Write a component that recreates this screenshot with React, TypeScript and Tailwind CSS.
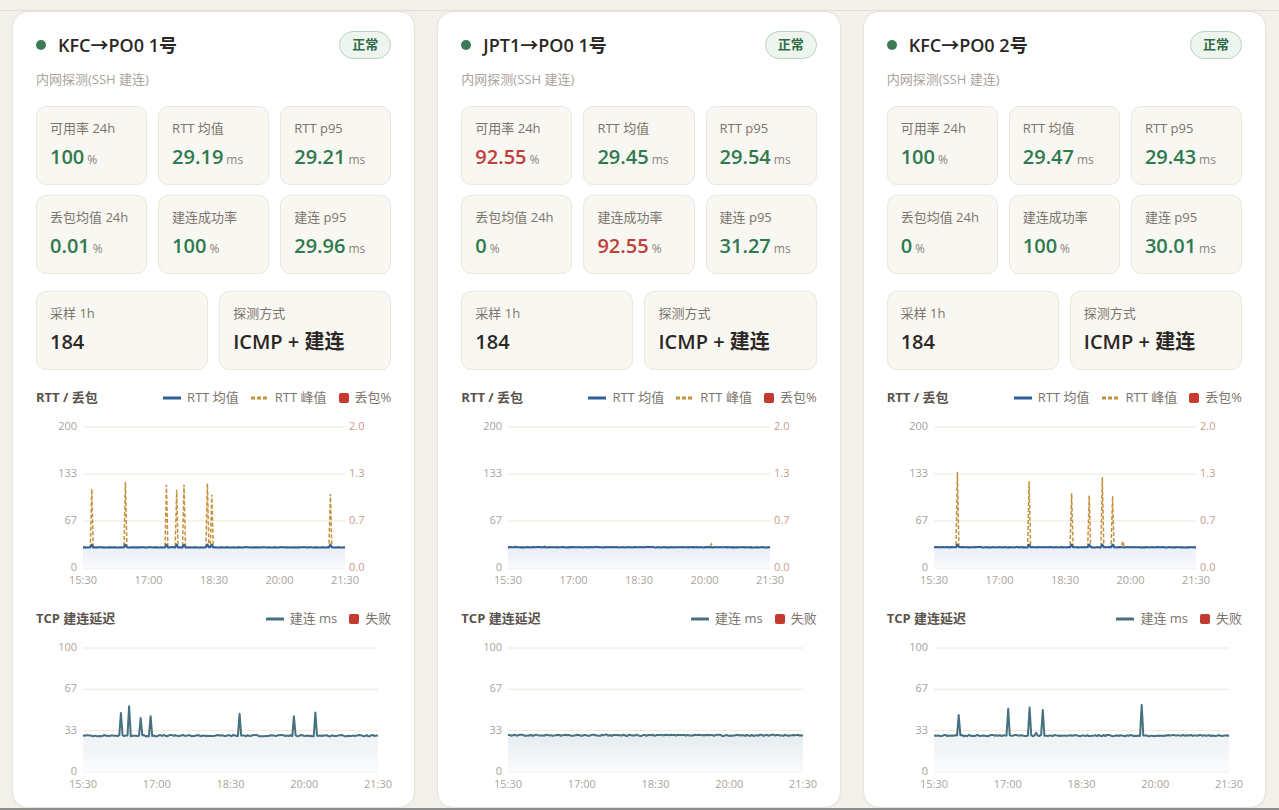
import React from 'react'

type Tile = { label: string; value: string; unit: string; bad?: boolean }
type Card = {
  title: string
  tiles: Tile[]
  rttBase: number
  rttPeaks: number[][]
  tcpBase: number
  tcpSpikes: number[][]
  seed: number
}

const cards: Card[] = [
  {
    title: 'KFC→PO0 1号',
    tiles: [
      { label: '可用率 24h', value: '100', unit: '%' },
      { label: 'RTT 均值', value: '29.19', unit: 'ms' },
      { label: 'RTT p95', value: '29.21', unit: 'ms' },
      { label: '丢包均值 24h', value: '0.01', unit: '%' },
      { label: '建连成功率', value: '100', unit: '%' },
      { label: '建连 p95', value: '29.96', unit: 'ms' },
    ],
    rttBase: 29.2,
    rttPeaks: [[0.034, 112], [0.164, 122], [0.321, 118], [0.359, 111], [0.385, 118], [0.477, 120], [0.489, 104], [0.943, 105]],
    tcpBase: 29.3,
    tcpSpikes: [[0.129, 47.6], [0.156, 53], [0.197, 43.5], [0.227, 45], [0.532, 47], [0.715, 45], [0.786, 48]],
    seed: 11,
  },
  {
    title: 'JPT1→PO0 1号',
    tiles: [
      { label: '可用率 24h', value: '92.55', unit: '%', bad: true },
      { label: 'RTT 均值', value: '29.45', unit: 'ms' },
      { label: 'RTT p95', value: '29.54', unit: 'ms' },
      { label: '丢包均值 24h', value: '0', unit: '%' },
      { label: '建连成功率', value: '92.55', unit: '%', bad: true },
      { label: '建连 p95', value: '31.27', unit: 'ms' },
    ],
    rttBase: 29.4,
    rttPeaks: [[0.779, 34], [0.03, 31], [0.14, 31]],
    tcpBase: 29.6,
    tcpSpikes: [],
    seed: 23,
  },
  {
    title: 'KFC→PO0 2号',
    tiles: [
      { label: '可用率 24h', value: '100', unit: '%' },
      { label: 'RTT 均值', value: '29.47', unit: 'ms' },
      { label: 'RTT p95', value: '29.43', unit: 'ms' },
      { label: '丢包均值 24h', value: '0', unit: '%' },
      { label: '建连成功率', value: '100', unit: '%' },
      { label: '建连 p95', value: '30.01', unit: 'ms' },
    ],
    rttBase: 29.4,
    rttPeaks: [[0.088, 136], [0.363, 123], [0.523, 106], [0.592, 103], [0.641, 129], [0.683, 102], [0.718, 38]],
    tcpBase: 29.4,
    tcpSpikes: [[0.085, 46], [0.251, 51], [0.322, 52], [0.349, 31.5], [0.369, 50], [0.702, 54]],
    seed: 37,
  },
]

function mkSeries(n: number, base: number, jit: number, seed: number, spikes: number[][]) {
  let s = seed
  const rnd = () => {
    s = (s * 9301 + 49297) % 233280
    return s / 233280
  }
  const v = Array.from({ length: n }, () => base + (rnd() - 0.5) * jit)
  for (const [f, h] of spikes) v[Math.round(f * (n - 1))] = h
  return v
}

function linePath(v: number[], x0: number, x1: number, yb: number, yt: number, max: number) {
  return v
    .map((d, i) => `${i ? 'L' : 'M'}${(x0 + (i / (v.length - 1)) * (x1 - x0)).toFixed(1)},${(yb - (d / max) * (yb - yt)).toFixed(1)}`)
    .join('')
}

const xTicks = ['15:30', '17:00', '18:30', '20:00', '21:30']

function RttChart({ card, idx }: { card: Card; idx: number }) {
  const x0 = 47, x1 = 309, yt = 10, yb = 151
  const n = 180
  const bumps = card.rttPeaks.filter((p) => p[1] > 60).map((p) => [p[0], card.rttBase + 4])
  const mean = mkSeries(n, card.rttBase, 0.5, card.seed, bumps)
  const peak = mkSeries(n, card.rttBase + 0.3, 0.3, card.seed + 5, card.rttPeaks)
  const meanD = linePath(mean, x0, x1, yb, yt, 200)
  const rows = [['200', '2.0'], ['133', '1.3'], ['67', '0.7'], ['0', '0.0']]
  return (
    <svg width="355" height="175" className="mt-[9px] block overflow-visible">
      <defs>
        <linearGradient id={`rttFill${idx}`} x1="0" y1="0" x2="0" y2="1">
          <stop offset="0" stopColor="#e8edf7" />
          <stop offset="1" stopColor="#f9fafd" />
        </linearGradient>
      </defs>
      {rows.map((r, i) => {
        const y = yt + ((yb - yt) / 3) * i
        return (
          <g key={i}>
            <line x1={x0} x2={x1} y1={y} y2={y} stroke="#eee8dc" strokeWidth="1" />
            <text x={41} y={y} textAnchor="end" dominantBaseline="middle" fontSize="11" fill="#aaa49b">{r[0]}</text>
            <text x={313} y={y} textAnchor="start" dominantBaseline="middle" fontSize="11" fill="#c89c8b">{r[1]}</text>
          </g>
        )
      })}
      {xTicks.map((t, i) => (
        <text key={t} x={x0 + ((x1 - x0) / 4) * i} y={164} textAnchor="middle" dominantBaseline="middle" fontSize="11" fill="#aaa49b">{t}</text>
      ))}
      <path d={`${meanD}L${x1},${yb}L${x0},${yb}Z`} fill={`url(#rttFill${idx})`} />
      <path d={linePath(peak, x0, x1, yb, yt, 200)} fill="none" stroke="#c4903c" strokeWidth="1.5" strokeDasharray="4 2" />
      <path d={meanD} fill="none" stroke="#2f5f98" strokeWidth="2" strokeLinejoin="round" />
    </svg>
  )
}

function TcpChart({ card, idx }: { card: Card; idx: number }) {
  const x0 = 47, x1 = 342, yt = 10, yb = 134
  const v = mkSeries(180, card.tcpBase, 1.1, card.seed + 13, card.tcpSpikes)
  const d = linePath(v, x0, x1, yb, yt, 100)
  const rows = ['100', '67', '33', '0']
  return (
    <svg width="355" height="158" className="mt-[9px] block overflow-visible">
      <defs>
        <linearGradient id={`tcpFill${idx}`} x1="0" y1="0" x2="0" y2="1">
          <stop offset="0" stopColor="#e5ecef" />
          <stop offset="1" stopColor="#fafbfc" />
        </linearGradient>
      </defs>
      {rows.map((r, i) => {
        const y = yt + ((yb - yt) / 3) * i
        return (
          <g key={i}>
            <line x1={x0} x2={x1} y1={y} y2={y} stroke="#eee8dc" strokeWidth="1" />
            <text x={41} y={y} textAnchor="end" dominantBaseline="middle" fontSize="11" fill="#aaa49b">{r}</text>
          </g>
        )
      })}
      {xTicks.map((t, i) => (
        <text key={t} x={x0 + ((x1 - x0) / 4) * i} y={147} textAnchor="middle" dominantBaseline="middle" fontSize="11" fill="#aaa49b">{t}</text>
      ))}
      <path d={`${d}L${x1},${yb}L${x0},${yb}Z`} fill={`url(#tcpFill${idx})`} />
      <path d={d} fill="none" stroke="#46717f" strokeWidth="2" strokeLinejoin="round" />
    </svg>
  )
}

function LineKey({ color, dashed }: { color: string; dashed?: boolean }) {
  return (
    <svg width="18" height="4" className="block">
      <line x1="0" x2="18" y1="2" y2="2" stroke={color} strokeWidth="3" strokeDasharray={dashed ? '4 2' : undefined} />
    </svg>
  )
}

function Square() {
  return <span className="w-[10px] h-[10px] rounded-[2px] bg-[#c43a2f]" />
}

function StatTile({ t }: { t: Tile }) {
  return (
    <div className="h-[79px] rounded-[10px] border border-[#ece7dc] bg-[#f9f7f2] px-[13px] pt-[12px]">
      <div className="text-[13px] leading-[18px] text-[#7b756d]">{t.label}</div>
      <div className="mt-[6px] flex items-baseline leading-[28px]">
        <span className={`text-[20px] font-semibold ${t.bad ? 'text-[#c0403a]' : 'text-[#2f7a4e]'}`}>{t.value}</span>
        <span className="ml-[3px] text-[12px] text-[#8a847c]">{t.unit}</span>
      </div>
    </div>
  )
}

function BigTile({ label, value }: { label: string; value: string }) {
  return (
    <div className="h-[79px] rounded-[10px] border border-[#ece7dc] bg-[#f9f7f2] px-[13px] pt-[12px]">
      <div className="text-[13px] leading-[18px] text-[#7b756d]">{label}</div>
      <div className="mt-[6px] text-[20px] leading-[28px] font-semibold text-[#2b2724]">{value}</div>
    </div>
  )
}

function ProbeCard({ card, idx }: { card: Card; idx: number }) {
  return (
    <div className="h-full rounded-[16px] border border-[#e8e3d8] bg-white px-[23px] pt-[19px] shadow-[0_1px_2px_rgba(0,0,0,0.03)]">
      <div className="flex h-[28px] items-center justify-between">
        <div className="flex items-center gap-3">
          <span className="w-[10px] h-[10px] rounded-full bg-[#3b7a54]" />
          <span className="text-[18px] font-semibold text-[#2b2724]">{card.title}</span>
        </div>
        <span className="flex h-[28px] items-center rounded-full border border-[#b9d4c0] bg-[#eef5ef] px-[12px] text-[13px] font-bold text-[#2f6b46]">正常</span>
      </div>
      <div className="mt-[10px] text-[13px] leading-[20px] text-[#aaa39a]">内网探测(SSH 建连)</div>
      <div className="mt-[17px] grid grid-cols-3 gap-x-[11px] gap-y-[10px]">
        {card.tiles.map((t) => (
          <StatTile key={t.label} t={t} />
        ))}
      </div>
      <div className="mt-[17px] grid grid-cols-2 gap-[11px]">
        <BigTile label="采样 1h" value="184" />
        <BigTile label="探测方式" value="ICMP + 建连" />
      </div>
      <div className="mt-[18px] flex h-[20px] items-center justify-between">
        <span className="text-[13px] font-bold text-[#5a544c]">RTT / 丢包</span>
        <div className="flex items-center gap-[12px] text-[13px] text-[#7b756d]">
          <span className="flex items-center gap-[6px]"><LineKey color="#2f5f98" />RTT 均值</span>
          <span className="flex items-center gap-[6px]"><LineKey color="#c4903c" dashed />RTT 峰值</span>
          <span className="flex items-center gap-[6px]"><Square />丢包%</span>
        </div>
      </div>
      <RttChart card={card} idx={idx} />
      <div className="mt-[17px] flex h-[20px] items-center justify-between">
        <span className="text-[13px] font-bold text-[#5a544c]">TCP 建连延迟</span>
        <div className="flex items-center gap-[12px] text-[13px] text-[#7b756d]">
          <span className="flex items-center gap-[6px]"><LineKey color="#46717f" />建连 ms</span>
          <span className="flex items-center gap-[6px]"><Square />失败</span>
        </div>
      </div>
      <TcpChart card={card} idx={idx} />
    </div>
  )
}

export default function App() {
  return (
    <div
      className="flex h-[810px] w-full flex-col overflow-hidden bg-[#f2f0eb]"
      style={{ fontFamily: '"Open Sans", "Noto Sans CJK SC", sans-serif' }}
    >
      <div className="h-[11px] shrink-0 border-b border-[#e3ded3]" />
      <div className="grid h-[797px] shrink-0 grid-cols-3 gap-[22px] pl-3 pr-[13px]">
        {cards.map((c, i) => (
          <ProbeCard key={c.title} card={c} idx={i} />
        ))}
      </div>
      <div className="h-[2px] shrink-0 bg-[#8e8e8e]" />
    </div>
  )
}
